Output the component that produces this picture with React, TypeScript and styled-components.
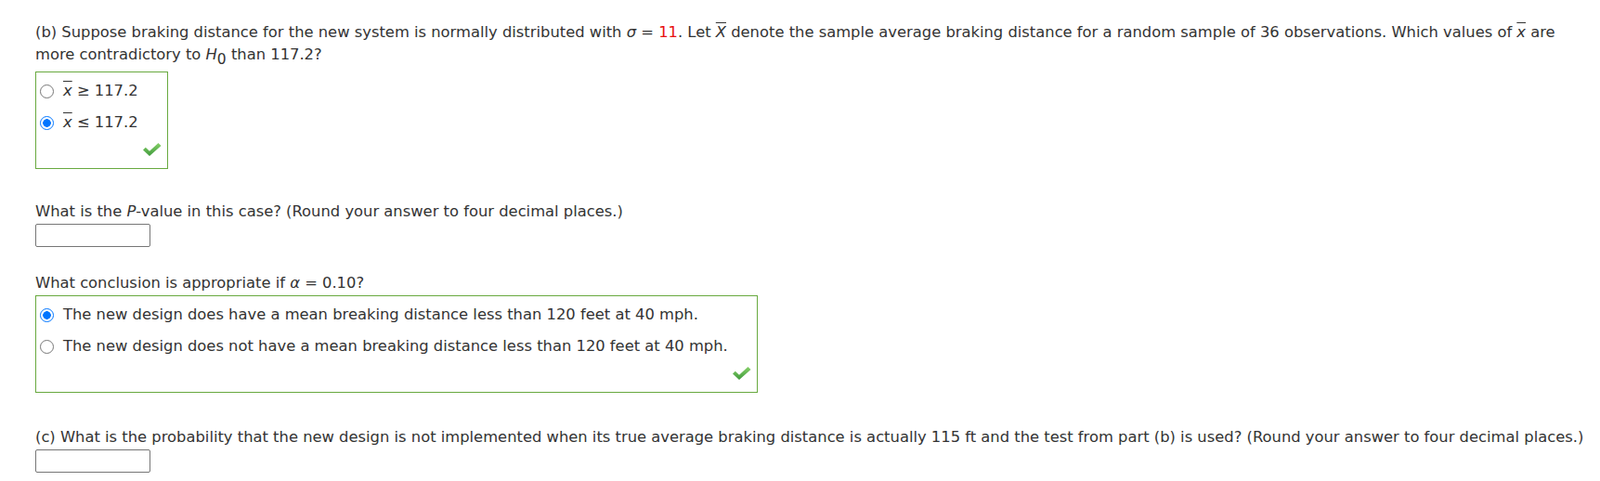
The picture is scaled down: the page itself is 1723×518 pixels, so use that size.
import React from "react";
import styled, { createGlobalStyle } from "styled-components";

const GlobalStyle = createGlobalStyle`
  body {
    margin: 0;
    background: #fff;
    font-family: "DejaVu Sans", Verdana, sans-serif;
    font-size: 16.35px;
    line-height: 24px;
    color: #333;
  }
`;

const Page = styled.div`
  padding: 23px 8px 0 38px;
`;

const Prompt = styled.p<{ $gap?: number }>`
  margin: ${(p) => p.$gap ?? 0}px 0 0 0;
`;

const Var = styled.i`
  font-style: italic;
`;

const Bar = styled.i`
  font-style: italic;
  text-decoration: overline;
`;

const Sub = styled.sub`
  font-size: 0.95em;
  line-height: 0;
  vertical-align: -0.32em;
`;

const Red = styled.span`
  color: #e8110f;
`;

const AnswerBox = styled.div<{ $gap: number }>`
  display: flex;
  flex-direction: column;
  width: fit-content;
  margin-top: ${(p) => p.$gap}px;
  border: 1px solid #68a93f;
  padding: 3px 31px 0 4px;
`;

const Choice = styled.label`
  display: flex;
  align-items: center;
  gap: 10px;
  height: 34px;
  white-space: nowrap;
`;

const Radio = styled.input`
  appearance: none;
  margin: 0;
  width: 15px;
  height: 15px;
  flex: none;
  box-sizing: border-box;
  border-radius: 50%;
  border: 1px solid #767676;
  background: #fff;

  &:checked {
    border: 1.6px solid #0075ff;
    background: radial-gradient(circle, #0075ff 0 4px, #fff 4.6px);
  }
`;

const CheckRow = styled.div`
  display: flex;
  justify-content: flex-end;
  align-items: flex-end;
  height: 32px;
  margin-right: -25px;
  padding-bottom: 13px;
  box-sizing: border-box;
`;

const AnswerInput = styled.input`
  display: block;
  box-sizing: border-box;
  width: 124px;
  height: 25px;
  margin-top: 1px;
  border: 1px solid #767676;
  border-radius: 2px;
  padding: 2px 4px;
  font: inherit;
`;

const CheckMark = () => (
  <svg width="20" height="14" viewBox="0 0 20 14">
    <defs>
      <linearGradient id="chk" x1="0" y1="0" x2="0" y2="1">
        <stop offset="0" stopColor="#86d068" />
        <stop offset="1" stopColor="#3f9a3c" />
      </linearGradient>
    </defs>
    <polygon
      points="0,7.5 2.8,4.8 7,8.8 16.5,0 19.5,3 7,14"
      fill="url(#chk)"
    />
  </svg>
);

const options = [
  {
    name: "b1",
    items: [
      { label: <><Bar>x</Bar> ≥ 117.2</>, checked: false },
      { label: <><Bar>x</Bar> ≤ 117.2</>, checked: true },
    ],
  },
  {
    name: "b3",
    items: [
      {
        label: "The new design does have a mean breaking distance less than 120 feet at 40 mph.",
        checked: true,
      },
      {
        label: "The new design does not have a mean breaking distance less than 120 feet at 40 mph.",
        checked: false,
      },
    ],
  },
];

const Choices = ({ group, gap }: { group: (typeof options)[number]; gap: number }) => (
  <AnswerBox $gap={gap}>
    {group.items.map((item, i) => (
      <Choice key={i}>
        <Radio type="radio" name={group.name} defaultChecked={item.checked} />
        <span>{item.label}</span>
      </Choice>
    ))}
    <CheckRow>
      <CheckMark />
    </CheckRow>
  </AnswerBox>
);

export default function App() {
  return (
    <>
      <GlobalStyle />
      <Page>
        <Prompt>
          (b) Suppose braking distance for the new system is normally distributed with{" "}
          <Var>σ</Var> = <Red>11</Red>. Let <Bar>X</Bar> denote the sample average braking
          distance for a random sample of 36 observations. Which values of <Bar>x</Bar> are
          more contradictory to <Var>H</Var>
          <Sub>0</Sub> than 117.2?
        </Prompt>
        <Choices group={options[0]} gap={6} />

        <Prompt $gap={34}>
          What is the <Var>P</Var>-value in this case? (Round your answer to four decimal places.)
        </Prompt>
        <AnswerInput type="text" />

        <Prompt $gap={27}>
          What conclusion is appropriate if <Var>α</Var> = 0.10?
        </Prompt>
        <Choices group={options[1]} gap={1} />

        <Prompt $gap={36}>
          (c) What is the probability that the new design is not implemented when its true
          average braking distance is actually 115 ft and the test from part (b) is used? (Round
          your answer to four decimal places.)
        </Prompt>
        <AnswerInput type="text" />
      </Page>
    </>
  );
}
